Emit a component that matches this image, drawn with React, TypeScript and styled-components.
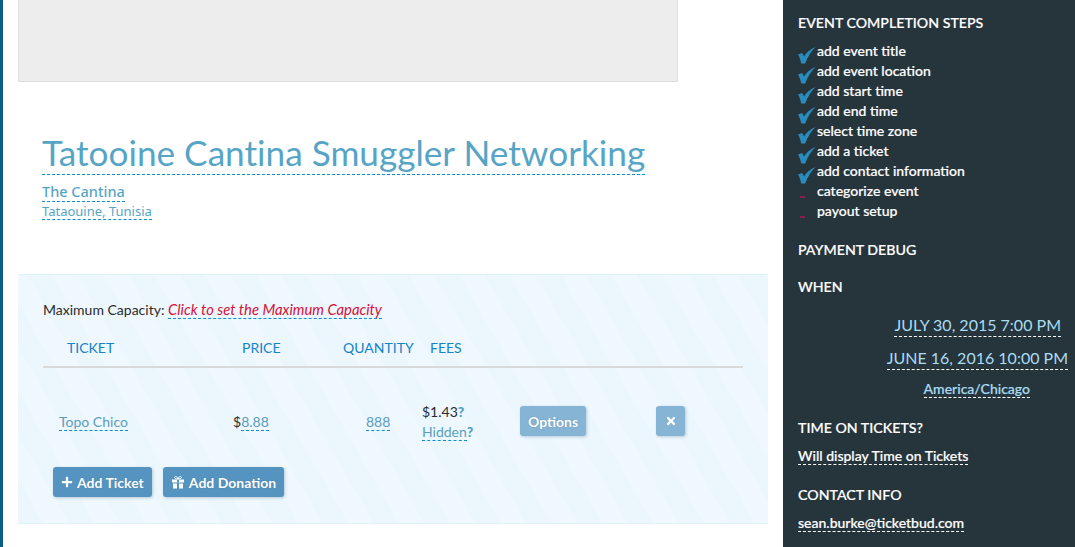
import React from "react";
import styled, { createGlobalStyle } from "styled-components";
import { FaPlus, FaTimes } from "react-icons/fa";

const GlobalStyle = createGlobalStyle`
    html, body {
        margin: 0;
        padding: 0;
        height: 100%;
        overflow: hidden;
        background: #fff;
        font-family: "Lato", "Liberation Sans", sans-serif;
        font-size: 14px;
        color: #2b2b2b;
    }
`

const Page = styled.div`
    display: flex;
    height: 547px;
    border-left: 3px solid #0b5f85;
`

const Main = styled.main`
    width: 750px;
    margin-left: 15px;
    flex-shrink: 0;
`

const ImageBox = styled.div`
    width: 658px;
    height: 81px;
    background: #ededed;
    border: 1px solid #dedede;
    border-top: 0;
`

const Heading = styled.header`
    display: flex;
    flex-direction: column;
    align-items: flex-start;
    padding: 50px 0 0 24px;
    height: 142px;
    color: #57a5c6;
`

const Editable = styled.span`
    border-bottom: 1px dashed #0a8fd6;
`

const Title = styled(Editable)`
    font-size: 35.2px;
    font-variant-ligatures: none;
    line-height: 40px;
    padding-bottom: 2px;
`

const Venue = styled(Editable)`
    font-family: "Noto Sans", sans-serif;
    font-size: 14.5px;
    font-weight: 500;
    line-height: 16px;
    margin-top: 8px;
    padding-bottom: 2px;
`

const Place = styled(Editable)`
    font-family: "Noto Sans", sans-serif;
    font-size: 13px;
    line-height: 16px;
    padding-top: 1px;
`

const Panel = styled.section`
    box-sizing: border-box;
    height: 250px;
    padding: 25px 25px 0;
    border-top: 1px solid #dff1f9;
    border-bottom: 1px solid #dff1f9;
    background: repeating-linear-gradient(
        60deg,
        #ebf6fd 0 22px,
        #eef8fe 22px 44px
    );
`

const Capacity = styled.div`
    line-height: 18px;
`

const CapacityLink = styled(Editable)`
    color: #d90f36;
    font-size: 14.8px;
    font-style: italic;
`

const Table = styled.div`
    margin-top: 9px;
`

const HeadRow = styled.div`
    display: grid;
    grid-template-columns: 190px 110px 79px 98px 136px 87px;
    height: 38px;
    align-items: center;
    border-bottom: 2px solid #d9d9d9;
    color: #1583c9;
`

const HeadCell = styled.div<{ $indent: number }>`
    padding-left: ${(p) => p.$indent}px;
`

const TicketRow = styled.div`
    display: grid;
    grid-template-columns: 190px 110px 79px 98px 136px 87px;
    box-sizing: border-box;
    height: 83px;
    padding-top: 23px;
    align-items: center;
    color: #5b9dbd;
`

const Cell = styled.div<{ $indent?: number }>`
    padding-left: ${(p) => p.$indent || 0}px;
`

const Dark = styled.span`
    color: #2b2b2b;
`

const Fees = styled.div`
    display: flex;
    flex-direction: column;
    align-items: flex-start;
    line-height: 20px;
    padding-top: 1px;
`

const Help = styled.b`
    color: #4ea3c4;
    font-weight: 900;
`

const Button = styled.button<{ $pale?: boolean }>`
    display: inline-flex;
    align-items: center;
    gap: 4px;
    height: 30px;
    padding: 0 8px;
    border: 0;
    border-radius: 3px;
    background: ${(p) => (p.$pale ? "#85b4d4" : "#5593c0")};
    box-shadow: 1px 1px 3px rgba(60, 100, 130, 0.3);
    color: #fff;
    font-family: inherit;
    font-size: 14px;
    font-weight: 700;
    text-shadow: 0 0 1px rgba(40, 70, 100, 0.4);
`

const CloseButton = styled(Button)`
    width: 29px;
    justify-content: center;
    padding: 0;
    font-size: 12px;
`

const Actions = styled.div`
    display: flex;
    gap: 11px;
    padding: 16px 0 0 10px;
`

const Sidebar = styled.aside`
    flex: 1;
    margin-left: 15px;
    padding: 0 7px 0 15px;
    background: #26343c;
    color: #fff;
    -webkit-text-stroke: 0.2px #fff;
`

const SideTitle = styled.h4<{ $top: number }>`
    margin: ${(p) => p.$top}px 0 0;
    font-size: 14.2px;
    font-weight: 500;
    line-height: 18px;
`

const Steps = styled.ul`
    list-style: none;
    margin: 9px 0 0;
    padding: 0;
`

const Step = styled.li`
    display: flex;
    height: 20px;
    line-height: 20px;
    font-weight: 500;
`

const Mark = styled.span`
    position: relative;
    width: 19px;
    flex-shrink: 0;
`

const CheckIcon = styled.svg`
    position: absolute;
    left: 0;
    top: 5px;
    width: 18px;
    height: 18px;
`

const Dash = styled.i`
    position: absolute;
    left: 2px;
    top: 15px;
    width: 5px;
    height: 2px;
    background: #8a1f4a;
`

const Dates = styled.div`
    display: flex;
    flex-direction: column;
    align-items: flex-end;
    margin-top: 18px;
    color: #a9dcf2;
    -webkit-text-stroke: 0;
`

const DateLink = styled.span<{ $pad: number }>`
    margin-right: ${(p) => p.$pad}px;
    margin-bottom: 10px;
    font-size: 16px;
    line-height: 22px;
    border-bottom: 1px dashed #fff;
`

const Zone = styled.div`
    text-align: right;
    padding-right: 38px;
    margin-top: -1px;
    color: #a9dcf2;
    -webkit-text-stroke: 0.2px #a9dcf2;
    font-weight: 500;
    line-height: 19px;
`

const SideLink = styled.div`
    margin-top: 10px;
    line-height: 18px;
    font-weight: 500;
`

const WhiteLink = styled.span`
    border-bottom: 1px dashed #fff;
`

const steps: [string, boolean][] = [
    ["add event title", true],
    ["add event location", true],
    ["add start time", true],
    ["add end time", true],
    ["select time zone", true],
    ["add a ticket", true],
    ["add contact information", true],
    ["categorize event", false],
    ["payout setup", false],
]

const GiftIcon = () => (
    <svg width="14" height="13" viewBox="0 0 13 13" fill="#fff">
        <path d="M0.5 3.5H12.5V6.5H0.5Z" />
        <path d="M1.5 7.5H5.5V12.5H1.5Z" />
        <path d="M7.5 7.5H11.5V12.5H7.5Z" />
        <path d="M5.5 3.5H7.5V6.5H5.5Z" fill="#5593c0" />
        <path
            d="M6.5 3C5 3 3 2.6 3 1.5C3 0.6 4.6 0.3 5.4 1C6 1.5 6.3 2.2 6.5 3C6.7 2.2 7 1.5 7.6 1C8.4 0.3 10 0.6 10 1.5C10 2.6 8 3 6.5 3Z"
            fill="none"
            stroke="#fff"
            strokeWidth="1"
        />
    </svg>
)

export default function App() {
    return (
        <Page>
            <GlobalStyle />
            <Main>
                <ImageBox />
                <Heading>
                    <Title>Tatooine Cantina Smuggler Networking</Title>
                    <Venue>The Cantina</Venue>
                    <Place>Tataouine, Tunisia</Place>
                </Heading>
                <Panel>
                    <Capacity>
                        Maximum Capacity: <CapacityLink>Click to set the Maximum Capacity</CapacityLink>
                    </Capacity>
                    <Table>
                        <HeadRow>
                            <HeadCell $indent={24}>TICKET</HeadCell>
                            <HeadCell $indent={9}>PRICE</HeadCell>
                            <HeadCell $indent={0}>QUANTITY</HeadCell>
                            <HeadCell $indent={8}>FEES</HeadCell>
                        </HeadRow>
                        <TicketRow>
                            <Cell $indent={16}><Editable>Topo Chico</Editable></Cell>
                            <Cell><Dark>$</Dark><Editable>8.88</Editable></Cell>
                            <Cell $indent={23}><Editable>888</Editable></Cell>
                            <Fees>
                                <span><Dark>$1.43</Dark><Help>?</Help></span>
                                <span><Editable>Hidden</Editable><Help>?</Help></span>
                            </Fees>
                            <Cell><Button $pale>Options</Button></Cell>
                            <Cell><CloseButton $pale aria-label="Remove"><FaTimes /></CloseButton></Cell>
                        </TicketRow>
                    </Table>
                    <Actions>
                        <Button><FaPlus size={12} /> Add Ticket</Button>
                        <Button><GiftIcon /> Add Donation</Button>
                    </Actions>
                </Panel>
            </Main>
            <Sidebar>
                <SideTitle $top={14}>EVENT COMPLETION STEPS</SideTitle>
                <Steps>
                    {steps.map(([label, done]) => (
                        <Step key={label}>
                            <Mark>
                                {done ? (
                                    <CheckIcon viewBox="0 0 18 18">
                                        <path
                                            d="M0 8.5 L4.2 7 L6 10.5 C8.5 6.5 12.5 3 17.5 1 C13 5.5 9.5 11 7.2 17.5 L3.2 17.5 C2.6 14 1.6 11 0 8.5 Z"
                                            fill="#2a8cbd"
                                        />
                                    </CheckIcon>
                                ) : (
                                    <Dash />
                                )}
                            </Mark>
                            {label}
                        </Step>
                    ))}
                </Steps>
                <SideTitle $top={20}>PAYMENT DEBUG</SideTitle>
                <SideTitle $top={19}>WHEN</SideTitle>
                <Dates>
                    <DateLink $pad={7}>JULY 30, 2015 7:00 PM</DateLink>
                    <DateLink $pad={0}>JUNE 16, 2016 10:00 PM</DateLink>
                </Dates>
                <Zone><WhiteLink>America/Chicago</WhiteLink></Zone>
                <SideTitle $top={21}>TIME ON TICKETS?</SideTitle>
                <SideLink><WhiteLink>Will display Time on Tickets</WhiteLink></SideLink>
                <SideTitle $top={21}>CONTACT INFO</SideTitle>
                <SideLink><WhiteLink>sean.burke@ticketbud.com</WhiteLink></SideLink>
            </Sidebar>
        </Page>
    )
}
